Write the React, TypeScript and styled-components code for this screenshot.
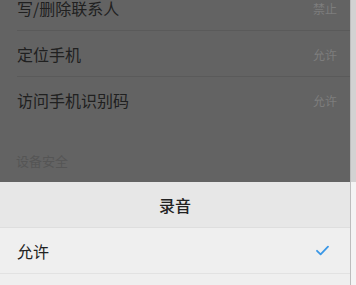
import React from "react";
import styled, { createGlobalStyle } from "styled-components";

const Global = createGlobalStyle`
  html, body { margin: 0; padding: 0; }
  body {
    width: 356px;
    height: 285px;
    overflow: hidden;
    background: #f2f2f2;
    font-family: "Noto Sans CJK SC", "Noto Sans", sans-serif;
  }
`;

const Frame = styled.div`
  display: flex;
  width: 356px;
  height: 285px;
  overflow: hidden;
`;

const Screen = styled.div`
  width: 350px;
  display: flex;
  flex-direction: column;
`;

const Edge = styled.div`
  width: 6px;
  border-left: 1px solid #bdbdbd;
  box-sizing: border-box;
  background: linear-gradient(#d2d2d2 0, #d2d2d2 182px, #f4f4f4 182px);
`;

const Dimmed = styled.div`
  background: #636363;
  height: 182px;
  display: flex;
  flex-direction: column;
  overflow: hidden;
`;

const List = styled.div`
  margin-top: -15px;
  display: flex;
  flex-direction: column;
`;

const Row = styled.div<{ $divider?: boolean }>`
  height: 46px;
  display: flex;
  align-items: center;
  justify-content: space-between;
  padding: 0 13px 0 17px;
  box-sizing: border-box;
  position: relative;
  &::after {
    content: "";
    display: ${(p) => (p.$divider ? "block" : "none")};
    position: absolute;
    left: 17px;
    right: 0;
    bottom: 0;
    height: 1px;
    background: #5a5a5a;
  }
`;

const Label = styled.span`
  font-size: 16px;
  color: #202020;
`;

const Value = styled.span`
  font-size: 12px;
  color: #7d7d7d;
`;

const SectionHeader = styled.div`
  flex: 1;
  display: flex;
  align-items: flex-end;
  padding: 0 0 12px 16px;
  font-size: 13px;
  color: #555555;
`;

const Sheet = styled.div`
  flex: 1;
  display: flex;
  flex-direction: column;
  background: #efefef;
`;

const SheetTitle = styled.div`
  height: 45px;
  display: flex;
  align-items: center;
  justify-content: center;
  background: #e7e7e7;
  border-bottom: 1px solid #dedede;
  font-size: 16px;
  font-weight: 500;
  color: #222222;
`;

const Option = styled.div`
  height: 45px;
  display: flex;
  align-items: center;
  justify-content: space-between;
  padding: 0 21px 0 17px;
  border-bottom: 1px solid #e2e2e2;
  font-size: 16px;
  color: #222222;
`;

const Check = () => (
  <svg width="13" height="11" viewBox="0 0 13 11" fill="none">
    <path d="M1 5.8 L4.6 9.4 L12 1.6" stroke="#3a97e6" strokeWidth="1.8" strokeLinecap="round" strokeLinejoin="round" />
  </svg>
);

export default function App() {
  return (
    <>
      <Global />
      <Frame>
        <Screen>
          <Dimmed>
            <List>
              <Row $divider>
                <Label>写/删除联系人</Label>
                <Value>禁止</Value>
              </Row>
              <Row $divider>
                <Label>定位手机</Label>
                <Value>允许</Value>
              </Row>
              <Row>
                <Label>访问手机识别码</Label>
                <Value>允许</Value>
              </Row>
            </List>
            <SectionHeader>设备安全</SectionHeader>
          </Dimmed>
          <Sheet>
            <SheetTitle>录音</SheetTitle>
            <Option>
              <span>允许</span>
              <Check />
            </Option>
          </Sheet>
        </Screen>
        <Edge />
      </Frame>
    </>
  );
}
